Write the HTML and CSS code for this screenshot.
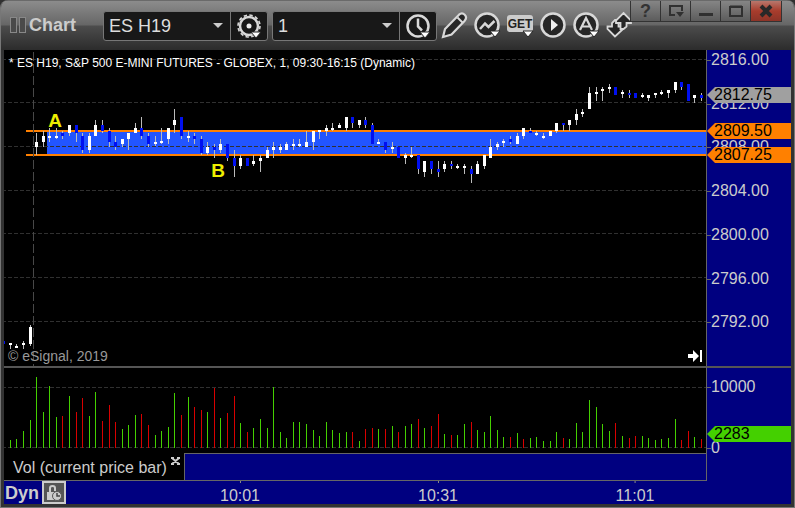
FILE: index.html
```html
<!DOCTYPE html>
<html lang="en">
<head>
<meta charset="utf-8">
<title>Chart</title>
<link rel="stylesheet" href="styles.css">
</head>
<body>
<div class="window">
  <header class="titlebar">
    <span class="grip"><i></i><i></i></span>
    <h1 class="title">Chart</h1>
    <div class="combo">
      <label class="pick"><select aria-label="Symbol"><option>ES H19</option></select></label>
      <button class="tool" aria-label="Symbol settings">
        <svg width="28" height="28" viewBox="0 0 28 28"><g class="metal"><circle cx="14" cy="14" r="9" stroke-width="2.5"/><circle cx="14" cy="14" r="11" stroke-width="1.600" stroke-dasharray="3.4 2.36"/></g><circle cx="14" cy="14" r="2.500" fill="#eee"/><path class="drop" d="M16 20h10l-5 6z"/></svg>
      </button>
    </div>
    <div class="combo">
      <label class="pick"><select aria-label="Interval"><option>1</option></select></label>
      <button class="tool" aria-label="Time template">
        <svg width="28" height="28" viewBox="0 0 28 28"><g class="metal"><circle cx="14" cy="14" r="10.5" stroke-width="2.5"/><path d="M14 6.500v8l4 4" stroke-width="2.5"/></g><path class="drop" d="M16 20h10l-5 6z"/></svg>
      </button>
    </div>
    <nav class="tools">
      <button class="tool" aria-label="Draw">
        <svg width="28" height="28" viewBox="0 0 28 28"><path class="metal body" stroke-width="2.2" d="M2 26l2-8L18 3.700q3-2.500 5.700 0t0 6L10.500 23.500z"/><path class="metal" stroke-width="2" d="M16.500 6.500l5 5"/></svg>
      </button>
      <button class="tool" aria-label="Studies">
        <svg width="28" height="28" viewBox="0 0 28 28"><circle class="metal body" cx="13" cy="14" r="11.500" stroke-width="2.5"/><path class="metal" stroke-width="2.500" d="M6 18l5-5.500 3.500 3.500 6-6"/><path class="drop" d="M16 20h10l-5 6z"/></svg>
      </button>
      <button class="tool" aria-label="GET">
        <svg width="28" height="28" viewBox="0 0 28 28"><rect x="0" y="4" width="26" height="17" rx="3" fill="#ccc"/><text x="13" y="17" text-anchor="middle" class="get">GET</text><path class="drop" d="M16 20h10l-5 6z"/></svg>
      </button>
      <button class="tool" aria-label="Play">
        <svg width="28" height="28" viewBox="0 0 28 28"><circle class="metal body" cx="13" cy="14" r="11.500" stroke-width="2.5"/><path fill="#eee" d="M11 8l7 6-7 6z"/></svg>
      </button>
      <button class="tool" aria-label="Alerts">
        <svg width="28" height="28" viewBox="0 0 28 28"><circle class="metal body" cx="13" cy="14" r="11.500" stroke-width="2.5"/><path class="metal" stroke-width="2.200" d="M7 19l6-12 6 12M9 15.500h8"/><path class="drop" d="M16 20h10l-5 6z"/></svg>
      </button>
      <button class="tool" aria-label="Link">
        <svg width="28" height="28" viewBox="0 0 28 28"><g class="metal body" stroke-width="1.800"><path d="M9 25.500L1.500 18v-2.500H6V12l3-3h3.500v6.500H17V18z"/><path d="M17.500 2L25 9.500V12h-4.500v3.500l-3 2.500h-3v-6H10V9.500z"/></g></svg>
      </button>
    </nav>
    <div class="winbuttons">
      <button aria-label="Help">?</button>
      <button aria-label="Dock"><svg width="16" height="14" viewBox="0 0 16 14"><path fill="none" stroke="#303030" stroke-width="2" d="M7 11H2V2h12v5"/><path fill="#303030" d="M8 8h8l-4 5z"/></svg></button>
      <button aria-label="Minimize"><svg width="16" height="14" viewBox="0 0 16 14"><path fill="#303030" d="M1 9h14v3H1z"/></svg></button>
      <button aria-label="Maximize"><svg width="16" height="14" viewBox="0 0 16 14"><path fill="none" stroke="#303030" stroke-width="2" d="M2 3h12v9H2zM2 2.500h12"/></svg></button>
      <button class="close" aria-label="Close"><svg width="16" height="14" viewBox="0 0 16 14"><path fill="none" stroke="#282828" stroke-width="4" d="M3 2l10 10M13 2L3 12"/></svg></button>
    </div>
  </header>
  <main class="board">
    <section class="pane price">
      <svg id="price" class="plot" viewBox="0 0 702 316" preserveAspectRatio="none" shape-rendering="crispEdges"></svg>
      <p class="caption">* ES H19, S&amp;P 500 E-MINI FUTURES - GLOBEX, 1, 09:30-16:15 (Dynamic)</p>
      <p class="copyright">© eSignal, 2019</p>
      <div id="notes"></div>
      <button class="latest" aria-label="Go to latest bar"><svg width="16" height="14" viewBox="0 0 16 14"><path fill="#fff" d="M1 5h5V1l6 6-6 6V9H1zM13 1h2v12h-2z"/></svg></button>
    </section>
    <aside id="price-axis" class="axis"></aside>
    <section class="pane volume">
      <svg id="volume" class="plot" viewBox="0 0 702 85" preserveAspectRatio="none" shape-rendering="crispEdges"></svg>
    </section>
    <aside id="volume-axis" class="axis volume-axis"></aside>
    <div class="tabs">
      <div class="tab"><span>Vol (current price bar)</span><button aria-label="Close tab"><svg width="9" height="8" viewBox="0 0 9 8"><path fill="none" stroke="#ccc" stroke-width="2" d="M1 1l7 6M8 1L1 7M0 1h3M6 1h3M0 7h3M6 7h3"/></svg></button></div>
      <div class="tabfill"></div>
    </div>
    <aside class="axis"></aside>
    <footer class="timebar">
      <strong>Dyn</strong>
      <button class="lock" aria-label="Lock time"><svg width="18" height="18" viewBox="0 0 18 18"><path fill="none" stroke="#ccc" stroke-width="2" d="M5 8V4q0-2 2.500-2T10 4v3"/><path fill="#ccc" d="M2 8h8v8H2z"/><circle cx="12" cy="12" r="4.500" fill="#ccc" stroke="#555"/><path fill="none" stroke="#444" stroke-width="1.500" d="M12 9v3h3"/></svg></button>
      <div id="times"></div>
    </footer>
  </main>
</div>
<script src="chart.js"></script>
</body>
</html>
```
FILE: styles.css
```css
* { box-sizing: border-box; }
body {
  margin: 0;
  background: #303030;
  color: #ccc;
  font: 16px/20px "Liberation Sans", Arial, sans-serif;
}
p, h1 { margin: 0; }
button { padding: 0; border: 0; background: none; color: inherit; font: inherit; }
svg { display: block; }

.window {
  display: flex;
  flex-direction: column;
  height: 100vh;
  border: solid #777;
  border-width: 0 1px 1px;
  border-radius: 8px 8px 0 0;
  background: #333;
  overflow: hidden;
}

.titlebar {
  display: flex;
  flex: none;
  align-items: flex-start;
  height: 50px;
  padding-left: 9px;
  border-top: 1px solid #6a6a6a;
  background: linear-gradient(#8c8c8c, #666 24px, #4c4c4c 25px, #2c2c2c);
}
.titlebar > * { flex: none; }
.grip { display: flex; gap: 2px; width: 19px; margin-top: 16px; }
.grip i { width: 7px; height: 16px; border: 1px solid #888; background: #4a4a4a; }
.title { width: 74px; margin-top: 14px; font-size: 18px; line-height: 20px; }
.combo {
  display: flex;
  width: 165px;
  height: 30px;
  margin: 10px 4px 0 0;
  border: 1px solid #777;
  border-radius: 3px;
  background: #181818;
}
.pick { position: relative; flex: 1; }
.pick::after {
  content: "";
  position: absolute;
  top: 11px;
  right: 7px;
  border: solid transparent;
  border-width: 5px 5px 0;
  border-top-color: #ccc;
  pointer-events: none;
}
.pick select {
  width: 100%;
  height: 28px;
  padding: 0 5px;
  border: 0;
  outline: 0;
  background: none;
  color: #ddd;
  font: 18px/28px "Liberation Sans", Arial, sans-serif;
  appearance: none;
}
.combo .tool { display: grid; place-items: center; width: 37px; border-left: 1px solid #777; }
.tools { display: flex; gap: 5px; margin: 10px -5px 0 0; }
.metal { fill: none; stroke: #d8d8d8; }
.metal.body { fill: #262626; }
.drop { fill: #fff; stroke: #262626; stroke-width: 1; }
.get { fill: #222; font: bold 12px "Liberation Sans", Arial, sans-serif; }
.winbuttons { display: flex; margin: 0 12px 0 auto; border: 1px solid #333; border-top: 0; }
.winbuttons button {
  display: grid;
  place-items: center;
  width: 30px;
  height: 20px;
  border-right: 1px solid #333;
  background: linear-gradient(#858585, #5c5c5c);
  color: #333;
  font-size: 18px;
  font-weight: bold;
}
.winbuttons .close { border: 0; background: linear-gradient(#b8776c, #a83c2c 50%, #8c3428); }

.board {
  display: grid;
  flex: 1;
  grid-template: minmax(0, 1fr) 87px 28px 23px / minmax(0, 1fr) 85px;
  min-height: 0;
  margin: 0 3px 3px;
  background: #000080;
}
.pane { position: relative; min-width: 0; background: #000; }
.plot { width: 100%; height: 100%; }
.volume, .volume-axis { border-top: 2px solid #555; }
.axis { position: relative; border-left: 1px solid #666; }
.caption { position: absolute; top: 3px; left: 5px; color: #fff; font-size: 12px; white-space: nowrap; }
.copyright { position: absolute; bottom: 0; left: 4px; color: #999; font-size: 14px; }
.latest { position: absolute; right: 3px; bottom: 3px; }
.note { position: absolute; color: #ee0; font-size: 19px; font-weight: bold; transform: translate(-50%, -50%); }

.tick, .mark { position: absolute; left: 0; line-height: 16px; transform: translateY(-50%); }
.tick { padding-left: 4px; }
.tick::before { content: ""; position: absolute; top: 8px; left: 0; width: 4px; height: 1px; background: #666; }
.mark {
  width: 100%;
  padding-left: 7px;
  color: #000;
  clip-path: polygon(0 50%, 8px 0, 100% 0, 100% 100%, 8px 100%);
}
.gray { background: #a0a0a0; }
.orange { background: #ff8000; }
.green { background: #44d000; }

.tabs { display: flex; border-bottom: 1px solid #666; }
.tab { display: flex; width: 181px; padding: 5px 4px 0 9px; border-right: 1px solid #666; background: #000; }
.tab span { flex: 1; }
.tab button { align-self: flex-start; margin-top: -1px; }
.tabfill { flex: 1; border-top: 1px solid #666; }
.timebar { position: relative; display: flex; gap: 3px; padding-left: 1px; }
.timebar strong { font-size: 18px; line-height: 24px; }
.lock { display: grid; place-items: center; width: 24px; height: 23px; border: 2px solid #ccc; background: #555; }
.time { position: absolute; top: 5px; transform: translateX(-50%); }
.time::before { content: ""; position: absolute; top: -5px; left: 50%; width: 1px; height: 2px; background: #888; }
```
FILE: chart.js
```js
// Each bar: wick top, wick bottom, body top, body bottom, down flag.
const bars = [
  [291,294,291,294,1],[293,299,293,295,0],[294,298,296,298,0],[291,299,293,295,0],[275,296,277,294,0],
  [83,105,92,97,0],[81,97,86,92,0],[78,92,86,88,0],[78,89,86,88,0],[81,89,83,86,1],[75,86,75,83,0],
  [75,92,75,83,1],[83,103,86,100,1],[83,103,86,100,0],[70,86,75,86,0],[70,83,75,81,1],[78,97,81,92,1],
  [86,100,92,97,1],[89,97,89,94,0],[83,100,83,89,0],[73,83,78,83,0],[67,89,78,86,1],[83,97,86,94,1],
  [86,96,92,94,0],[78,94,91,93,0],[78,94,78,89,0],[59,83,70,75,0],[67,89,67,86,1],[81,92,86,88,0],
  [83,94,86,89,1],[86,105,89,103,1],[92,105,97,103,0],[94,108,97,100,1],[89,103,94,100,0],[94,111,94,108,1],
  [100,127,108,116,1],[105,119,108,116,0],[108,116,108,116,1],[105,116,111,114,0],[105,122,108,111,0],
  [97,108,100,108,0],[92,108,97,100,0],[94,103,97,100,0],[92,100,94,100,0],[89,100,94,96,0],[89,97,94,96,0],
  [81,97,92,97,0],[81,100,81,92,0],[80,89,80,82,0],[75,86,78,81,0],[73,81,78,80,0],[73,78,75,78,0],
  [67,81,67,78,0],[67,78,67,73,1],[70,78,70,75,0],[67,78,70,75,1],[73,94,75,94,1],[89,94,92,94,0],
  [92,103,92,100,1],[92,103,97,99,0],[97,108,97,108,1],[103,114,105,108,0],[97,108,105,107,0],
  [105,124,105,119,1],[111,127,111,122,0],[111,124,111,119,1],[111,127,119,122,1],[111,122,114,119,0],
  [111,119,114,116,1],[114,119,116,118,0],[114,124,116,118,0],[116,133,119,124,1],[111,124,114,124,0],
  [105,119,105,116,0],[89,108,97,108,0],[92,100,94,97,0],[89,97,91,93,0],[86,94,89,92,1],[83,94,86,94,0],
  [78,89,78,86,0],[78,83,81,83,1],[81,86,83,85,0],[83,89,86,88,0],[81,86,81,86,0],[73,83,73,81,0],
  [73,81,73,75,1],[70,81,70,75,0],[59,75,64,70,0],[59,67,62,64,0],[37,59,43,59,0],[37,51,42,44,0],
  [37,51,39,41,0],[34,43,37,39,0],[37,45,37,45,1],[40,48,42,44,0],[40,48,43,45,1],[43,48,43,48,1],
  [43,48,45,47,0],[45,51,45,48,0],[43,48,43,45,0],[40,45,42,44,0],[40,48,40,43,0],[32,43,32,40,0],
  [32,40,32,37,1],[34,51,34,51,1],[45,53,45,48,0],[43,51,45,48,1]
];

// Volume bar heights from the oldest bar; a negative height is a down bar.
const volumes = [
  8,9,17,28,71,36,62,31,-32,52,-36,-50,32,56,-27,-43,-26,19,23,33,-34,-23,13,17,21,55,-33,51,-41,-38,36,
  -60,30,-35,-52,25,-16,20,29,20,61,16,10,26,26,24,18,12,26,18,15,16,-16,7,-19,-20,19,-19,22,-16,22,24,
  -29,20,-22,-34,14,-13,13,24,-26,18,16,32,18,11,-11,15,-9,10,11,7,7,16,-10,9,25,16,48,41,24,17,-25,12,
  -10,-12,12,10,8,9,10,29,-8,-17,11,-9
];

const barX = i => Math.round(32.1 + 6.583 * i);
const priceY = p => 9 + (2816 - p) * 10.93;
const rect = (x, y, w, h, fill) => `<rect x="${x}" y="${y}" width="${w}" height="${h}" fill="${fill}"/>`;
const dash = y => `<path d="M0 ${y + 0.5}H702" stroke="#303030" stroke-dasharray="4 2" stroke-dashoffset="2"/>`;
const grid = [2816, 2812, 2808, 2804, 2800, 2796, 2792];
const high = Math.floor(priceY(2809.5));
const low = Math.floor(priceY(2807.25));

let art = rect(43, high + 2, 659, low - high - 2, "#2255ff");
art += rect(22, high, 680, 2, "#ff8000") + rect(22, low, 680, 2, "#ff8000");
art += grid.map(p => dash(Math.floor(priceY(p)))).join("");
art += `<path d="M29.5 0V316" stroke="#484848" stroke-dasharray="9 3" stroke-dashoffset="10"/>`;
bars.forEach(([wt, wb, bt, bb, down], k) => {
  const x = barX(k - 5);
  art += rect(x, wt, 1, wb - wt, "#bbb") + rect(x - 1, bt, 3, bb - bt, down ? "#0010f0" : "#fff");
});
document.getElementById("price").innerHTML = art;

document.getElementById("volume").innerHTML = dash(19) + dash(79) + volumes.map((v, k) =>
  rect(barX(k - 4), 80 - Math.abs(v), 1, Math.abs(v), v < 0 ? "#d80000" : "#44d000")).join("");

const place = (cls, y, total, text) =>
  `<span class="${cls}" style="top:${y / total * 100}%">${text}</span>`;
const priceTop = p => Math.round(priceY(p) + 1);
document.getElementById("price-axis").innerHTML =
  grid.map(p => place("tick", priceTop(p), 316, p.toFixed(2))).join("") +
  [[2812.75, "gray"], [2809.5, "orange"], [2807.25, "orange"]]
    .map(([p, c]) => place("mark " + c, Math.floor(priceY(p) + 1), 316, p.toFixed(2))).join("");
document.getElementById("volume-axis").innerHTML =
  place("tick", 19, 85, "10000") + place("tick", 80, 85, "0") + place("mark green", 66, 85, "2283");

document.getElementById("times").innerHTML = [["10:01", 31], ["10:31", 61], ["11:01", 91]]
  .map(([t, i]) => `<span class="time" style="left:${barX(i) / 702 * 100}%">${t}</span>`).join("");
document.getElementById("notes").innerHTML = [["A", 51, 71], ["B", 214, 121]]
  .map(([t, x, y]) => `<span class="note" style="left:${x / 702 * 100}%;top:${y / 316 * 100}%">${t}</span>`).join("");
```
